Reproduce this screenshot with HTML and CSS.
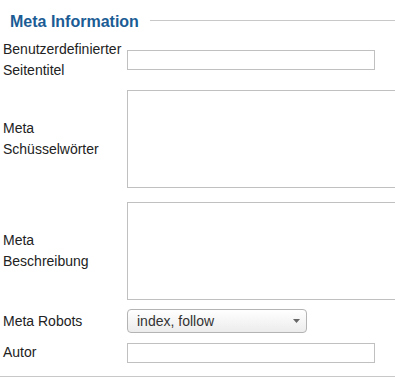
FILE: index.html
```html
<!DOCTYPE html>
<html lang="de">
<head>
    <meta charset="UTF-8">
    <meta name="viewport" content="width=device-width, initial-scale=1.0">
    <title>Meta Information</title>
    <link rel="stylesheet" href="styles.css">
</head>
<body>
    <div class="meta-box">
        <div class="legend">
            <span class="legend-text">Meta Information</span>
            <span class="legend-line"></span>
        </div>

        <div class="row">
            <label class="row-label" for="page-title">Benutzerdefinierter Seitentitel</label>
            <input class="text-input" type="text" id="page-title">
        </div>

        <div class="row row-keywords">
            <label class="row-label" for="meta-keywords">Meta Schüsselwörter</label>
            <textarea class="text-area" id="meta-keywords"></textarea>
        </div>

        <div class="row">
            <label class="row-label" for="meta-description">Meta Beschreibung</label>
            <textarea class="text-area" id="meta-description"></textarea>
        </div>

        <div class="row">
            <label class="row-label" for="meta-robots">Meta Robots</label>
            <div class="select-wrap">
                <select class="select" id="meta-robots">
                    <option>index, follow</option>
                    <option>noindex, follow</option>
                    <option>index, nofollow</option>
                    <option>noindex, nofollow</option>
                </select>
                <svg class="select-arrow" width="7" height="4" viewBox="0 0 7 4">
                    <path d="M0 0 H7 L3.5 4 Z" fill="#666"/>
                </svg>
            </div>
        </div>

        <div class="row">
            <label class="row-label" for="author">Autor</label>
            <input class="text-input" type="text" id="author">
        </div>

        <div class="bottom-line"></div>
    </div>
</body>
</html>
```

FILE: styles.css
```css
* {
    margin: 0;
    padding: 0;
    box-sizing: border-box;
}

body {
    background-color: #fff;
    font-family: 'Liberation Sans', Arial, sans-serif;
    font-size: 14px;
    color: #222;
    overflow: hidden;
}

.meta-box {
    padding-top: 12px;
}

.legend {
    display: flex;
    align-items: flex-start;
    height: 20px;
    padding-left: 10px;
    margin-bottom: 7px;
}

.legend-text {
    font-size: 16px;
    font-weight: bold;
    line-height: 20px;
    color: #1b5c95;
    white-space: nowrap;
}

.legend-line {
    flex: 1;
    margin-top: 8px;
    margin-left: 11px;
    border-top: 1px solid #c8c8c8;
}

.row {
    display: flex;
    align-items: center;
    margin-bottom: 9px;
}

.row-keywords {
    margin-bottom: 14px;
}

.row-label {
    flex: 0 0 127px;
    padding-left: 3px;
    padding-right: 5px;
    line-height: 21px;
}

.text-input {
    width: 248px;
    height: 20px;
    border: 1px solid #c0c0c0;
    background: #fff;
    font: inherit;
    outline: none;
}

.text-area {
    flex: 0 0 269px;
    height: 98px;
    border: 1px solid #c0c0c0;
    background: #fff;
    font: inherit;
    resize: none;
    outline: none;
}

.select-wrap {
    position: relative;
    width: 180px;
}

.select {
    appearance: none;
    -webkit-appearance: none;
    width: 180px;
    height: 24px;
    padding-left: 9px;
    border: 1px solid #b4b4b4;
    border-radius: 4px;
    background: linear-gradient(#fff, #ececec);
    font: inherit;
    color: #333;
    outline: none;
}

.select-arrow {
    position: absolute;
    top: 10px;
    right: 7px;
}

.bottom-line {
    margin-top: 13px;
    border-top: 1px solid #c8c8c8;
}
```
